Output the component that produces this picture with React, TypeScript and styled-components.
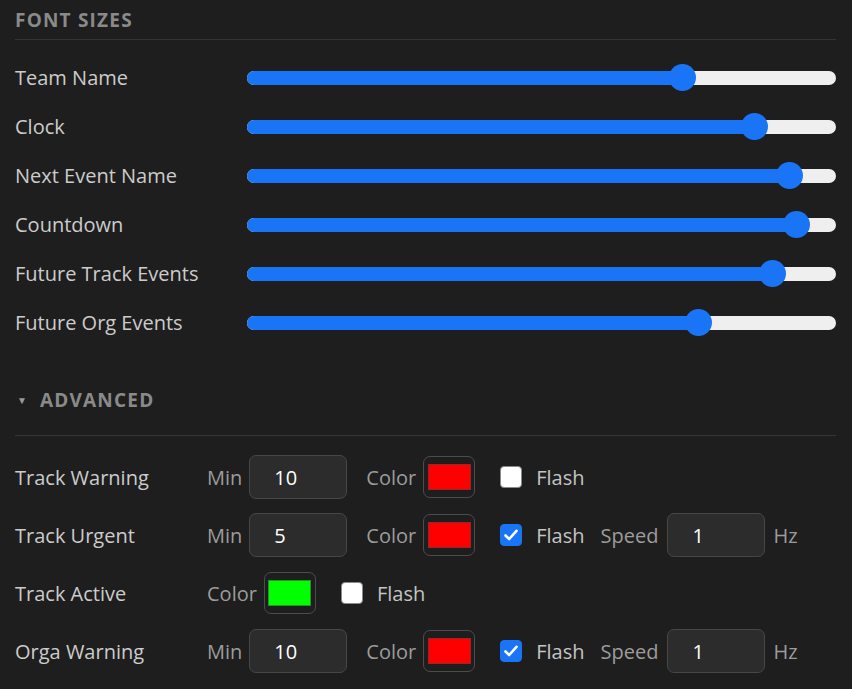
import styled, { createGlobalStyle } from "styled-components";

const GlobalStyle = createGlobalStyle`
    html, body {
        margin: 0;
        padding: 0;
        background: #1e1e1e;
    }
    body {
        font-family: "Open Sans", "Noto Sans", sans-serif;
        color: #cccccc;
    }
`;

type SliderItem = { label: string, value: number };
type AdvancedItem = {
    label: string,
    min?: number,
    color: string,
    flash: boolean,
    speed?: number,
};

const sliders: SliderItem[] = [
    { label: "Team Name", value: 0.75 },
    { label: "Clock", value: 0.879 },
    { label: "Next Event Name", value: 0.941 },
    { label: "Countdown", value: 0.954 },
    { label: "Future Track Events", value: 0.911 },
    { label: "Future Org Events", value: 0.779 },
];

const advanced: AdvancedItem[] = [
    { label: "Track Warning", min: 10, color: "#ff0000", flash: false },
    { label: "Track Urgent", min: 5, color: "#ff0000", flash: true, speed: 1 },
    { label: "Track Active", color: "#00ff00", flash: false },
    { label: "Orga Warning", min: 10, color: "#ff0000", flash: true, speed: 1 },
];

const THUMB = 27;

const Page = styled.div`
    padding: 0 16px 0 15px;
`;

const SectionTitle = styled.div`
    display: flex;
    align-items: center;
    gap: 13px;
    height: 40px;
    box-sizing: border-box;
    border-bottom: 1px solid #343434;
    font-size: 19px;
    font-weight: 700;
    letter-spacing: 1.2px;
    text-transform: uppercase;
    color: #8a8a8a;

    .caret {
        font-size: 10px;
        color: #9a9a9a;
        margin-left: 2px;
        letter-spacing: 0;
    }
`;

const SliderList = styled.div`
    padding-top: 13px;
`;

const SliderRow = styled.div`
    display: grid;
    grid-template-columns: 232px 1fr;
    align-items: center;
    height: 49px;
    font-size: 20px;
`;

const Track = styled.div`
    position: relative;
    height: 14px;
    border-radius: 7px;
    background: #efefef;
`;

const Fill = styled.div`
    position: absolute;
    left: 0;
    top: 0;
    bottom: 0;
    border-radius: 7px;
    background: #1a74f6;
`;

const Thumb = styled.div`
    position: absolute;
    top: 50%;
    width: ${THUMB}px;
    height: ${THUMB}px;
    margin: -${THUMB / 2}px 0 0 -${THUMB / 2}px;
    border-radius: 50%;
    background: #1a74f6;
`;

const AdvancedTitle = styled(SectionTitle)`
    margin-top: 31px;
    height: 58px;
    padding-bottom: 13px;
`;

const AdvancedList = styled.div`
    display: flex;
    flex-direction: column;
    gap: 14px;
    padding-top: 19px;
`;

const AdvancedRow = styled.div`
    display: grid;
    grid-template-columns: 192px 1fr;
    align-items: center;
    height: 44px;
    font-size: 20px;
`;

const Controls = styled.div`
    display: flex;
    align-items: center;
`;

const SubLabel = styled.span<{ $gap?: number }>`
    color: #9c9c9c;
    margin-right: ${p => p.$gap ?? 7}px;
`;

const NumberBox = styled.div`
    width: 98px;
    height: 44px;
    box-sizing: border-box;
    display: flex;
    align-items: center;
    padding-left: 24px;
    border: 1px solid #474747;
    border-radius: 7px;
    background: #2c2c2c;
    color: #ffffff;
    margin-right: 19px;
`;

const Swatch = styled.div`
    width: 52px;
    height: 42px;
    box-sizing: border-box;
    display: flex;
    align-items: center;
    justify-content: center;
    border: 1px solid #4c4c4c;
    border-radius: 7px;
    margin-right: 25px;

    span {
        width: 43px;
        height: 26px;
        box-sizing: border-box;
        border: 1px solid rgba(70, 70, 70, 0.6);
    }
`;

const Checkbox = styled.div<{ $checked: boolean }>`
    width: 22px;
    height: 22px;
    box-sizing: border-box;
    border-radius: 4px;
    display: flex;
    align-items: center;
    justify-content: center;
    margin-right: 14px;
    background: ${p => (p.$checked ? "#1a74f6" : "#ffffff")};
    border: 1px solid ${p => (p.$checked ? "#1a74f6" : "#8a8a8a")};
`;

const FlashLabel = styled.span`
    color: #c4c4c4;
    margin-right: 16px;
`;

const Unit = styled.span`
    color: #9c9c9c;
    margin-left: -11px;
`;

const Check = () => (
    <svg width="16" height="16" viewBox="0 0 16 16">
        <polyline points="2.5,8.5 6.2,12 13.5,3.8" fill="none" stroke="#fff" strokeWidth="2.6" strokeLinecap="round" strokeLinejoin="round" />
    </svg>
);

const Slider = ({ value }: { value: number }) => (
    <Track>
        <Fill style={{ width: `calc(${THUMB / 2}px + (100% - ${THUMB}px) * ${value})` }} />
        <Thumb style={{ left: `calc(${THUMB / 2}px + (100% - ${THUMB}px) * ${value})` }} />
    </Track>
);

export default function App() {
    return (
        <Page>
            <GlobalStyle />
            <SectionTitle>Font Sizes</SectionTitle>
            <SliderList>
                {sliders.map(s => (
                    <SliderRow key={s.label}>
                        <span>{s.label}</span>
                        <Slider value={s.value} />
                    </SliderRow>
                ))}
            </SliderList>
            <AdvancedTitle>
                <span className="caret">▼</span>
                <span>Advanced</span>
            </AdvancedTitle>
            <AdvancedList>
                {advanced.map(a => (
                    <AdvancedRow key={a.label}>
                        <span>{a.label}</span>
                        <Controls>
                            {a.min !== undefined && (
                                <>
                                    <SubLabel>Min</SubLabel>
                                    <NumberBox>{a.min}</NumberBox>
                                </>
                            )}
                            <SubLabel>Color</SubLabel>
                            <Swatch><span style={{ background: a.color }} /></Swatch>
                            <Checkbox $checked={a.flash}>{a.flash && <Check />}</Checkbox>
                            <FlashLabel>Flash</FlashLabel>
                            {a.speed !== undefined && (
                                <>
                                    <SubLabel $gap={9}>Speed</SubLabel>
                                    <NumberBox>{a.speed}</NumberBox>
                                    <Unit>Hz</Unit>
                                </>
                            )}
                        </Controls>
                    </AdvancedRow>
                ))}
            </AdvancedList>
        </Page>
    );
}
